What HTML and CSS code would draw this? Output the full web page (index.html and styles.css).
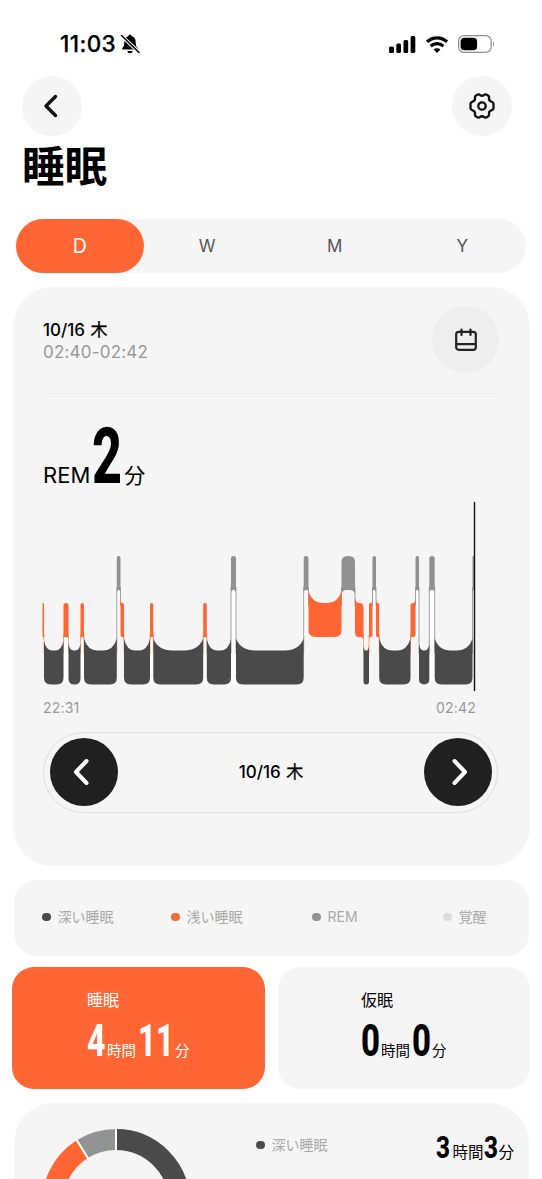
FILE: index.html
```html
<!DOCTYPE html>
<html lang="ja">
<head>
<meta charset="utf-8">
<title>睡眠</title>
<link rel="stylesheet" href="styles.css">
</head>
<body>
<main class="screen">
  <div class="status">
    <div class="status-left">
      <span class="clock">11:03</span>
      <svg class="bell" width="20" height="20" viewBox="0 0 20 20">
        <path d="M10 .7c1 0 1.700.6 1.900 1.500 2.600.8 3.800 3 3.800 5.500 0 4 .7 5 2 6.300.6.700.2 1.500-.7 1.500H3c-.9 0-1.300-.8-.7-1.500 1.300-1.300 2-2.300 2-6.300 0-2.500 1.200-4.700 3.800-5.500C8.300 1.300 9 .7 10 .7zM7.300 17h5.400c-.3 1.500-1.300 2.200-2.700 2.200S7.600 18.500 7.300 17z"/>
        <path d="M1.200 1.500l18 17" stroke="#fff" stroke-width="3.600"/>
        <path d="M1.500 1.500l17.500 17" stroke="#000" stroke-width="1.600" stroke-linecap="round"/>
      </svg>
    </div>
    <div class="status-right">
      <svg width="27" height="17" viewBox="0 0 27 17"><rect x="0" y="10.500" width="5" height="6.500" rx="1.600"/><rect x="7.300" y="7.500" width="4.700" height="9.500" rx="1.600"/><rect x="14.500" y="4" width="4.700" height="13" rx="1.600"/><rect x="21.600" y="0" width="4.700" height="17" rx="1.600"/></svg>
      <svg width="22" height="17" viewBox="0 0 22 17" fill="none" stroke="#000" stroke-width="3.200"><path d="M1 5.800a14.500 14.500 0 0 1 20 0M4.700 10.200a9 9 0 0 1 12.600 0"/><path d="M11 17L7.600 13.600a4.900 4.900 0 0 1 6.800 0z" fill="#000" stroke="none"/></svg>
      <svg width="37" height="18" viewBox="0 0 37 18"><rect x=".6" y=".6" width="32.600" height="16.800" rx="5.500" fill="none" stroke="#8d8d8d" stroke-width="1.200"/><rect x="2.600" y="2.700" width="16.500" height="12.600" rx="3.800"/><path d="M35 6.500q2.300 2.500 0 5z" fill="#888"/></svg>
    </div>
  </div>
  <header class="nav">
    <button class="round"><svg width="16" height="26" viewBox="0 0 16 26"><path d="M13.500 3.500L4 13l9.500 9.500" class="chev"/></svg></button>
    <button class="round"><svg width="28" height="28" viewBox="0 0 28 28" fill="none" stroke="#111" stroke-width="2.300" stroke-linejoin="round"><path d="M9.800 2.500Q11 2 12 3Q14 4.600 16 3Q17 2 18.200 2.500L20.300 3.700Q21.400 4.600 21 6Q20.700 8.800 23.400 9.600Q25 10 25.500 11.600V16.400Q25 18 23.400 18.400Q20.700 19.200 21 22Q21.400 23.400 20.300 24.300L18.200 25.500Q17 26 16 25Q14 23.400 12 25Q11 26 9.800 25.500L7.700 24.300Q6.600 23.400 7 22Q7.300 19.200 4.600 18.400Q3 18 2.500 16.400V11.600Q3 10 4.600 9.600Q7.300 8.800 7 6Q6.600 4.600 7.700 3.700Z"/><circle cx="14" cy="14" r="3.700"/></svg></button>
  </header>
  <h1 class="title">睡眠</h1>
  <nav class="tabs"><span class="tab active">D</span><span class="tab">W</span><span class="tab">M</span><span class="tab">Y</span></nav>

  <section class="card main-card">
    <div class="card-head">
      <div class="when"><div class="date">10/16 <span class="weekday">木</span></div><div class="range">02:40-02:42</div></div>
      <button class="cal"><svg width="22" height="24" viewBox="0 0 22 24" fill="none" stroke="#222" stroke-width="2.200" stroke-linecap="round"><rect x="1.200" y="3.800" width="19.600" height="18" rx="2.500"/><path d="M1.500 16.200h19M6.500 1.500v5.500M15.500 1.500v5.500"/></svg></button>
    </div>
    <div class="reading">
      <span class="stage">REM</span>
      <svg class="num" width="30" height="56"><text x="0" y="56" font-size="77" textLength="30" lengthAdjust="spacingAndGlyphs">2</text></svg>
      <span class="unit">分</span>
    </div>
    <svg class="chart" id="chart" width="440" height="192" viewBox="40 501 440 192"></svg>
    <div class="axis"><span>22:31</span><span>02:42</span></div>
    <div class="pager">
      <button class="dark"><svg width="18" height="28" viewBox="0 0 18 28"><path d="M14.500 3L4 14l10.500 11" class="chev light"/></svg></button>
      <span class="date">10/16 <span class="weekday">木</span></span>
      <button class="dark"><svg width="18" height="28" viewBox="0 0 18 28"><path d="M3.500 3L14 14 3.500 25" class="chev light"/></svg></button>
    </div>
  </section>

  <section class="card legend">
    <span class="key"><i class="dot deep"></i>深い睡眠</span>
    <span class="key"><i class="dot shallow"></i>浅い睡眠</span>
    <span class="key"><i class="dot rem"></i>REM</span>
    <span class="key"><i class="dot awake"></i>覚醒</span>
  </section>

  <div class="totals">
    <section class="total sleep">
      <div class="label">睡眠</div>
      <div class="value">
        <svg class="num" width="19" height="32"><text x="0" y="32" font-size="44" textLength="18.500" lengthAdjust="spacingAndGlyphs">4</text></svg><span class="hours">時間</span>
        <svg class="num elevens" width="36" height="32"><text x="0" y="32" font-size="44" textLength="36" lengthAdjust="spacingAndGlyphs">11</text></svg><span class="mins">分</span>
      </div>
    </section>
    <section class="total nap">
      <div class="label">仮眠</div>
      <div class="value">
        <svg class="num" width="19" height="32"><text x="0" y="32" font-size="44" textLength="19" lengthAdjust="spacingAndGlyphs">0</text></svg><span class="hours">時間</span>
        <svg class="num" width="19" height="32"><text x="0" y="32" font-size="44" textLength="19" lengthAdjust="spacingAndGlyphs">0</text></svg><span class="mins">分</span>
      </div>
    </section>
  </div>

  <section class="card breakdown">
    <svg class="donut" width="150" height="150" viewBox="-75 -75 150 150">
      <g fill="none" stroke-width="21">
        <circle r="63.500" class="arc-deep" pathLength="360" stroke-dasharray="262 98" transform="rotate(-90)"/>
        <circle r="63.500" class="arc-light" pathLength="360" stroke-dasharray="66 294" transform="rotate(172)"/>
        <circle r="63.500" class="arc-rem" pathLength="360" stroke-dasharray="32 328" transform="rotate(-122)"/>
      </g>
      <path d="M0-52v-23M-27.600-44.100l-12.100-19.400" stroke="#fff" stroke-width="2"/>
    </svg>
    <span class="key"><i class="dot deep"></i>深い睡眠</span>
    <div class="value small">
      <svg class="num" width="14" height="22.500"><text x="0" y="22.500" font-size="31" textLength="14" lengthAdjust="spacingAndGlyphs">3</text></svg><span class="hours">時間</span>
      <svg class="num" width="14" height="22.500"><text x="0" y="22.500" font-size="31" textLength="14" lengthAdjust="spacingAndGlyphs">3</text></svg><span class="mins">分</span>
    </div>
  </section>
</main>
<script src="chart.js"></script>
</body>
</html>
```

FILE: styles.css
```css
* { box-sizing: border-box; }
body { margin: 0; background: #fff; color: #000; font-family: Inter, "Noto Sans CJK JP", sans-serif; }
button { border: 0; padding: 0; display: flex; align-items: center; justify-content: center; border-radius: 50%; flex: none; }
svg { display: block; flex: none; }
.screen { width: 542px; height: 1179px; overflow: hidden; display: flex; flex-direction: column; }

.status { height: 76px; padding: 12px 47px 0 60px; display: flex; justify-content: space-between; align-items: center; flex: none; }
.status-left { display: flex; align-items: center; gap: 4px; }
.clock { font-size: 22.500px; font-weight: 500; line-height: 24px; letter-spacing: .4px; -webkit-text-stroke: .25px #000; }
.status-right { display: flex; align-items: center; gap: 10px; }

.nav { display: flex; justify-content: space-between; padding: 0 30px 0 22px; height: 60px; flex: none; }
.round { width: 60px; height: 60px; background: #f5f5f5; }
.chev { fill: none; stroke: #111; stroke-width: 3.4; stroke-linecap: round; stroke-linejoin: round; }
.chev.light { stroke: #fff; stroke-width: 4; }
.nav .round:first-child { padding-right: 5px; }
.title { margin: 7px 0 0 22px; height: 48px; line-height: 48px; font-size: 42.500px; font-weight: 700; flex: none; }

.tabs { margin: 28px 16px 0; height: 54px; display: grid; grid-template-columns: repeat(4, 1fr); background: #f5f5f5; border-radius: 27px; flex: none; }
.tab { display: flex; align-items: center; justify-content: center; font-size: 17px; color: #555; border-radius: 27px; }
.tab.active { background: #ff6633; color: #fff; font-size: 19.500px; font-weight: 400; }

.card { background: #f5f5f5; flex: none; }
.main-card { margin: 14px 12px 0 13px; height: 579px; border-radius: 40px; padding: 19px 31px 0 30px; }
.card-head { display: flex; justify-content: space-between; height: 88px; border-bottom: 1.500px solid #ebebeb; }
.when { padding-top: 13px; }
.date { font-size: 17px; font-weight: 500; line-height: 22px; }
.weekday { font-weight: 400; margin-left: 1px; -webkit-text-stroke: .3px #000; }
.range { font-size: 17px; line-height: 22px; color: #999; letter-spacing: .2px; }
.cal { width: 67px; height: 67px; background: #eee; }
.reading { display: flex; align-items: baseline; height: 90px; padding-top: 33px; }
.stage { font-size: 22px; line-height: 28px; }
.reading .num { margin-left: 2px; }
.unit { font-size: 21px; line-height: 28px; margin-left: 2px; }
.num { overflow: visible; font-family: Roboto, sans-serif; font-weight: 800; fill: currentColor; }
.chart { margin: 17px 0 0 -3px; }
.axis { display: flex; justify-content: space-between; width: 433px; margin-top: 6px; font-size: 14px; line-height: 18px; color: #999; letter-spacing: .2px; }
.pager { width: 455px; height: 81px; margin-top: 15px; border: 1.500px solid #ddd; border-radius: 41px; padding: 0 5px 1px 6px; display: flex; align-items: center; justify-content: space-between; }
.dark { width: 68px; height: 68px; background: #202020; }
.dark:first-child { padding-right: 6px; }
.dark:last-child { padding-left: 4px; }

.legend { margin: 14px 13px 0 14px; height: 76px; border-radius: 22px; padding: 0 0 2px 28px; display: grid; grid-template-columns: 129px 141px 131px 1fr; align-items: center; }
.key { display: flex; align-items: center; gap: 7px; font-size: 14px; line-height: 20px; color: #aaa; }
.dot { width: 8.500px; height: 8.500px; border-radius: 50%; }
.dot.deep { background: #4a4a4a; }
.dot.shallow { background: #f26b38; }
.dot.rem { background: #929292; }
.dot.awake { background: #ddd; }

.totals { margin: 11px 12px 0; display: grid; grid-template-columns: 253px 252px; gap: 13px; flex: none; }
.total { height: 122px; border-radius: 22px; padding-top: 21px; }
.sleep { background: #ff6633; color: #fff; padding-left: 75px; }
.nap { background: #f5f5f5; padding-left: 83px; }
.label { font-size: 16px; line-height: 24px; }
.value { display: flex; align-items: baseline; margin-top: 12px; }
.hours { font-size: 14.500px; line-height: 18px; margin: 0 2px 0 1px; }
.mins { font-size: 14.500px; line-height: 18px; margin-left: 1px; }

.breakdown { margin: 14px 13px 0 14px; height: 220px; border-radius: 40px; padding: 25px 15px 0 27px; display: flex; align-items: flex-start; }
.breakdown .key { margin: 7px 0 0 65px; }
.small { margin: 7px 0 0 auto; }
.small .hours { font-size: 15.500px; margin: 0 1px 0 2px; }
.small .mins { font-size: 15.500px; margin: 0; }
.arc-deep { stroke: #4a4a4a; }
.arc-light { stroke: #ff6633; }
.arc-rem { stroke: #929492; }

.fill-deep { fill: #4a4a4a; }
.fill-light { fill: #ff6633; }
.fill-rem { fill: #919191; }
.under { fill: #fdfdfd; }
.link { stroke: #999; stroke-width: .9; }
.link.warm { stroke: #f9a27f; }
.cursor { stroke: #111; stroke-width: 1.400; stroke-linecap: round; }
```

FILE: chart.js
```javascript
// Sleep stages over the night: [start, end, stage]; 0 = REM, 1 = light, 2 = deep.
const stages = [
  [42.5, 44, 1], [44, 63.5, 2], [63.5, 68.5, 1], [68.5, 80.5, 2], [80.5, 84, 1],
  [84, 116.8, 2], [116.8, 120.5, 0], [120.5, 124, 1], [124, 150, 2], [150, 153.3, 1],
  [153.3, 203.2, 2], [203.2, 206.8, 1], [206.8, 231, 2], [231, 236, 0], [236, 303.7, 2],
  [303.7, 308.5, 0], [308.5, 341.5, 1], [341.5, 355, 0], [355, 363.5, 1],
  [363.5, 369, 2], [369, 372.5, 1], [372.5, 376, 0], [376, 379.2, 1],
  [379.2, 410.5, 2], [410.5, 415.5, 1], [415.5, 419, 0], [419, 429.3, 2],
  [429.3, 434.7, 0], [434.7, 472.5, 2], [472.5, 475, 0]
];
const tops = [556, 603, 650.5];
const names = ['rem', 'light', 'deep'];
const H = 34;

function block(i) {
  const [a, b, s] = stages[i];
  const t = tops[s], u = t + H, w = b - a;
  const l = i ? stages[i - 1][2] : s;
  const r = i < stages.length - 1 ? stages[i + 1][2] : s;
  const c = Math.min(w / 2, w < 15 && s < 2 ? 6 : 7);
  // Corners next to a higher or lower stage flare out towards it.
  const fx = Math.min(w * .42, 19), fy = Math.min(12, 3 + fx * .8);
  let d = l < s ? `M${a} ${t - fy}Q${a + fx * .25} ${t} ${a + fx} ${t}` : `M${a} ${t + c}Q${a} ${t} ${a + c} ${t}`;
  d += r < s ? `L${b - fx} ${t}Q${b - fx * .25} ${t} ${b} ${t - fy}` : `L${b - c} ${t}Q${b} ${t} ${b} ${t + c}`;
  d += r > s ? `L${b} ${u + fy * .7}Q${b} ${u} ${b - fx} ${u}` : `L${b} ${u - c}Q${b} ${u} ${b - c} ${u}`;
  d += l > s ? `L${a + fx} ${u}Q${a} ${u} ${a} ${u + fy * .7}` : `L${a + c} ${u}Q${a} ${u} ${a} ${u - c}`;
  return `<path class="fill-${names[s]}" d="${d}Z"/>`;
}

let under = '', links = '', blocks = '';
stages.forEach(([a, b, s], i) => {
  if (s < 2 && b - a < 6 && i && i < stages.length - 1) {
    const deepest = Math.min(stages[i - 1][2], stages[i + 1][2]);
    if (deepest > s) under += `<rect class="under" x="${a}" y="${tops[s] + H - 1}" width="${b - a}" height="${tops[deepest] - tops[s]}"/>`;
  }
  if (i) {
    const p = stages[i - 1][2];
    const hi = Math.min(p, s), lo = Math.max(p, s);
    links += `<line class="link${hi ? ' warm' : ''}" x1="${a}" x2="${a}" y1="${tops[hi] + H - 3}" y2="${tops[lo] + 3}"/>`;
  }
  blocks += block(i);
});
document.getElementById('chart').innerHTML = under + links + blocks +
  '<line class="cursor" x1="474.500" x2="474.500" y1="502.500" y2="690.500"/>';
```
